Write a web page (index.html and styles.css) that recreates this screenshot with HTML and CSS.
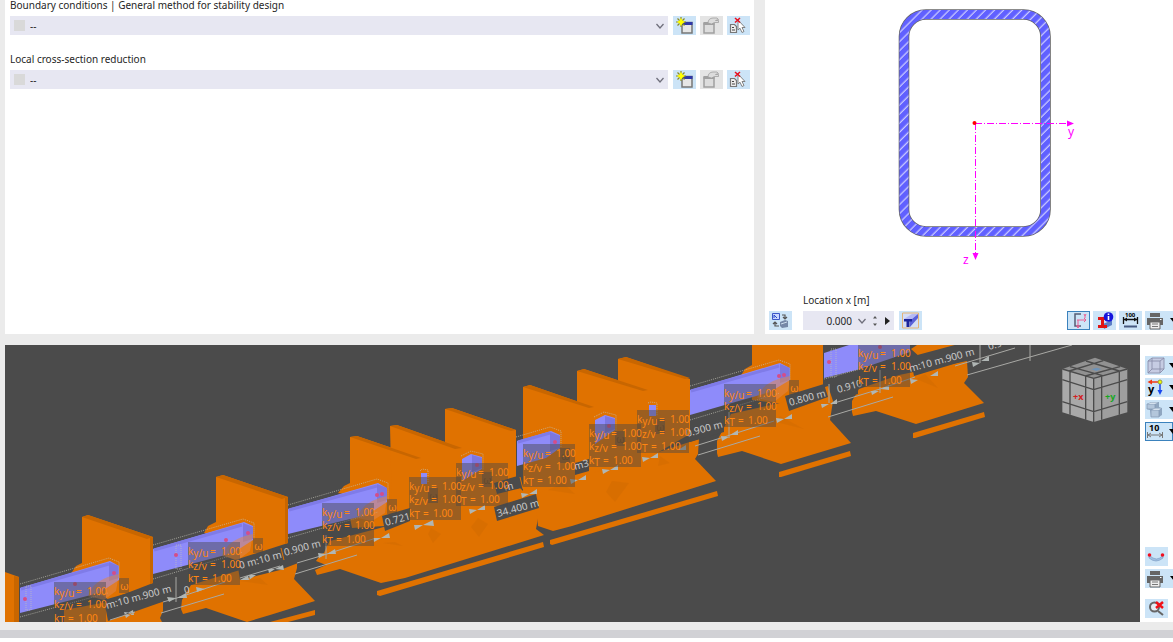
FILE: index.html
```html
<!DOCTYPE html>
<html lang="en">
<head>
<meta charset="utf-8">
<title>Member design</title>
<link rel="stylesheet" href="styles.css">
</head>
<body>
<svg class="defs" width="0" height="0" aria-hidden="true">
  <symbol id="chevron" viewBox="0 0 10 10"><path d="M1.500 3 L5 7 L8.500 3" fill="none" stroke="#70707c" stroke-width="1.300"/></symbol>
  <symbol id="new" viewBox="0 0 23 19">
    <path d="M9 6.500h10v10.500H9z" fill="#e6e6e6" stroke="#777" stroke-width="1.500"/><path d="M8.500 6h11v3h-11z" fill="#2f38a8"/>
    <path d="M8 1v10M3 6h10M4.500 2.500l7 7M11.500 2.500l-7 7" stroke="#8a8b22" stroke-width="1.200"/><path d="M8 2l1.500 2.500 2.500 1.500-2.500 1.500L8 10 6.500 7.500 4 6l2.500-1.500z" fill="#ff0"/>
  </symbol>
  <symbol id="edit" viewBox="0 0 23 19">
    <path d="M4 7.500h10v9.500H4z" fill="#ddd" stroke="#a0a0a0" stroke-width="1.500"/><path d="M3.500 6h11v3h-11z" fill="#a0a0a0"/>
    <path d="M8 7c0-3 2-5 5-5h4l1.500 1.500-3 1h3v2h-4l-3 1.500z" fill="#dcdcdc" stroke="#a0a0a0" stroke-width=".8"/>
  </symbol>
  <symbol id="pick" viewBox="0 0 23 19">
    <path d="M3.500 8.500h4l2 2v6h-6z" fill="#eee" stroke="#777" stroke-width="1.200"/><path d="M5 11.500h2M5 14h3" stroke="#444"/>
    <path d="M11 4v10l2-1.800 2 4.300 2-1-2-4h3z" fill="#fff" stroke="#777" stroke-width=".9"/>
    <path d="M8 2l5 4.500M13 2L8 6.500" stroke="#e81020" stroke-width="1.500"/>
  </symbol>
  <symbol id="printer" viewBox="0 0 18 18">
    <path d="M4 1h10v4H4zM1 6h16v7H1z" fill="#666"/><path d="M4 10h10v7H4z" fill="#eee" stroke="#666"/><path d="M6 12h6M6 14.500h6" stroke="#777"/><path d="M14 7.500h1.500" stroke="#fff"/>
  </symbol>
  <symbol id="caret" viewBox="0 0 8 5"><path d="M0 0h8L4 5z" fill="#000"/></symbol>
</svg>

<main class="app">
  <div class="top">
    <section class="panel form">
      <div class="field">
        <label for="boundary">Boundary conditions | General method for stability design</label>
        <div class="row">
          <div class="combo"><span class="swatch"></span><select id="boundary"><option>--</option></select><svg class="chev"><use href="#chevron"/></svg></div>
          <button class="tool" aria-label="New"><svg><use href="#new"/></svg></button>
          <button class="tool off" aria-label="Edit" disabled><svg><use href="#edit"/></svg></button>
          <button class="tool" aria-label="Pick"><svg><use href="#pick"/></svg></button>
        </div>
      </div>
      <div class="field">
        <label for="reduction">Local cross-section reduction</label>
        <div class="row">
          <div class="combo"><span class="swatch"></span><select id="reduction"><option>--</option></select><svg class="chev"><use href="#chevron"/></svg></div>
          <button class="tool" aria-label="New"><svg><use href="#new"/></svg></button>
          <button class="tool off" aria-label="Edit" disabled><svg><use href="#edit"/></svg></button>
          <button class="tool" aria-label="Pick"><svg><use href="#pick"/></svg></button>
        </div>
      </div>
    </section>

    <section class="panel section">
      <svg class="profile" viewBox="0 0 408 293">
        <defs><pattern id="hatch" width="6.4" height="6.4" patternUnits="userSpaceOnUse" patternTransform="rotate(45)"><path d="M3 0v6.400" stroke="#d0d0ff" stroke-width="1.200"/></pattern></defs>
        <rect x="139" y="14.500" width="141.500" height="217" rx="22" fill="none" stroke="#666" stroke-width="10.600"/>
        <rect x="139" y="14.500" width="141.500" height="217" rx="22" fill="none" stroke="#6060ff" stroke-width="9"/>
        <rect x="139" y="14.500" width="141.500" height="217" rx="22" fill="none" stroke="url(#hatch)" stroke-width="9"/>
        <path d="M210 123.500H302M210.500 123V253" fill="none" stroke="#f0f" stroke-dasharray="7 2 1 2"/>
        <path d="M302 120.500l7 3-7 3zM207.500 253h6l-3 7z" fill="#f0f"/>
        <circle cx="209.500" cy="123" r="2" fill="#f00"/>
        <text x="303" y="136" class="axis">y</text><text x="198" y="264" class="axis">z</text>
      </svg>
      <label class="loc-label" for="loc">Location x [m]</label>
      <div class="bar">
        <button class="tool" aria-label="Swap view"><svg viewBox="0 0 23 19"><path d="M3.500 2.500h7v6h-7z" fill="#c9d7ff" stroke="#3b57c7"/><path d="M5 7V4l3 3" stroke="#2449c8" fill="none"/><path d="M13 4h3v4M14 6l2 2 2-2M10 15H6v-4M4 13l2-2 2 2" stroke="#555" fill="none" stroke-width="1.200"/><path d="M11 11l5-2 3 1v6l-6 1-2-2z" fill="#7588a8"/><path d="M12 13l6-2" stroke="#cde"/></svg></button>
        <div class="spin"><input id="loc" type="text" value="0.000"><svg class="chev"><use href="#chevron"/></svg>
          <button class="updown" aria-label="Step"><svg viewBox="0 0 6 12"><path d="M3 1l2 2.500H1zM3 11l2-2.500H1z" fill="#555"/></svg></button>
          <button class="play" aria-label="Next"><svg viewBox="0 0 5 8"><path d="M0 0l5 4-5 4z" fill="#222"/></svg></button>
        </div>
        <button class="tool" aria-label="Section view"><svg viewBox="0 0 23 19"><path d="M3.500 2h16v15h-16z" fill="#d5def5" stroke="#e3b478"/><path d="M5 8l8-5h6l-6 5z" fill="#b5b9f4"/><path d="M13 8l6-5v4l-8 9V10h2z" fill="#5a61d8"/><path d="M5 8h8v2.500h-2.500V16H7.500v-5.500H5z" fill="#1c259a"/></svg></button>
        <span class="grow"></span>
        <button class="tool active" aria-label="Axes"><svg viewBox="0 0 23 19"><path d="M14 3H8v12h6" fill="none" stroke="#555c75" stroke-width="1.500"/><path d="M10 9h9M11 9v8M17 7l2 2-2 2M9.500 14l1.500 3 1.500-3M17 3l1 2 1-2M18 5v2" fill="none" stroke="#ea5d91"/></svg></button>
        <button class="tool" aria-label="Section info"><svg viewBox="0 0 23 19"><path d="M10 13l9-4v5l-8 4z" fill="#5c7fc6"/><path d="M5 6h9v3h-3v5h3v3H5v-3h3V9H5z" fill="#e01515"/><circle cx="15.500" cy="6" r="4.800" fill="#1515dd"/><path d="M15.500 5v4M15.500 2.500v1.500" stroke="#fff" stroke-width="1.600"/></svg></button>
        <button class="tool" aria-label="Dimensions"><svg viewBox="0 0 23 19"><text x="6" y="6" class="tiny">100</text><path d="M4.500 6v7M18.500 6v7M4 8.500h15" stroke="#111" fill="none" stroke-width="1.300"/><path d="M5 8.500l3-2v4zM18 8.500l-3-2v4z" fill="#111"/><path d="M5 15.500h13" stroke="#455980" stroke-width="2"/></svg></button>
        <button class="tool wide" aria-label="Print"><svg class="pr"><use href="#printer"/></svg><svg class="car"><use href="#caret"/></svg></button>
      </div>
    </section>
  </div>

  <div class="bottom">
    <svg class="scene" viewBox="5 345 1135 277">
      <!-- plates, bases and ground bars -->
      <g class="steel">
        <path d="M5 572l14 5v45H5z"/>
        <path d="M82 517l6-2 65 22v46l-44 17-27-19z"/><path d="M70 575l6-9 6-3v20zM64 610l38-7 54-16 7 11v13l-3 7 2 4H64z"/>
        <path d="M216 477l7-2 65 22v46l-53 17-19-8z"/><path d="M204 533l4-7 8-4v14zM182 600l9-15 49-15 57-14v12l-3 11 21 22-45 14-23 7-41-14-23 6-2-5z"/>
        <path d="M270 622l45-12v5l-27 7z"/>
        <path d="M350 437l7-1 71 24 54 60-130 8-2-10zM338 493l6-7 6-3v12z"/>
        <path d="M390 426l7-1 65 23 10 70-80-7zM445 409l7-1 64 22v80h-71z"/>
        <path d="M523 387l7-2 66 23v90h-73zM577 371l7-2 66 22v90h-73zM618 359l8-2 64 22v55l-52 30-20-13z"/>
        <path d="M316 561l14-20 50-13 140-40 20 20-4 21 8 6-139 43-24 5-41-14-23 6-2-5 11-5z"/>
        <path d="M377 591l166-49 1 5-164 49-3-1zM535 495l20-10 144-46-1 15-3 5 21 22-144 45-19 5-15-5z"/>
        <path d="M550 540l167-49 1 5-166 49-2-1z"/>
        <path d="M752 345h71v42l-40 17-31-4zM740 377l5-8 7-4v14z"/>
        <path d="M717 441l14-27 49-11 48-17 5 15-3 19 21 23-70 21-39-13-24 6-1-4z"/>
        <path d="M779 472l71-21 1 5-70 21h-2z"/>
        <path d="M911 349l6-4h44l-40 13zM852 401l7-12 40-14 68-14 1 16-4 6 20 20-68 21-40-13-23 5-1-4z"/>
        <path d="M913 433l71-21 1 5-70 21h-2z"/>
      </g>
      <g class="edge">
        <path d="M82 517l6-2 65 22-6 2zM216 477l7-2 65 22-6 2zM350 437l7-1 64 22-5 1zM390 426l7-1 65 23-7 1zM445 409l7-1 64 22-5 1zM523 387l7-2 64 22-5 1zM577 371l7-2 64 21-5 1zM618 359l8-2 64 21-5 1z"/>
        <path d="M14 576l5 1v45h-5zM150 538l3-1v46l-3 1zM285 498l3-1v46l-3 1z"/>
        <path d="M260 578l8 7-28-4zM395 542l8 4-20-3zM431 528l10 6-8 9-5-9zM478 518l10 6-9 13-8-10zM563 483l12 11-27-4zM612 481l17 2-14 19-9-10zM660 456l10 7-12 3zM780 416l24 13-28-7zM925 374l13 14-22-9z" opacity=".3"/>
      </g>
      <!-- dark dimension bands -->
      <g class="band">
        <path d="M104 600l65-19 13 14-74 26z"/><path d="M238 567l49-19 42-7-5 12-44 17-40 10z"/>
        <path d="M382 516l28-8v13l-25 10zM494 483l27-8v13l-24 6zM494 507l42-13 3 14-42 13zM575 463l14-4v12l-14 4zM690 430l34-12v14l-34 10z"/>
        <path d="M785 396l39-12 4 13-39 14zM832 386l26-8v16l-22 6zM910 357l67-18v18l-63 19z"/>
      </g>
      <!-- beams -->
      <g class="beam">
        <path d="M20 588l90-27 9 5v14l-20 13-79 20z"/><path d="M153 549l91-27 9 4v14l-20 13-80 21z"/>
        <path d="M288 509l90-26 9 5v14l-20 13-79 19z"/><path d="M421 473h6v11h-6zM462 459l9-5 11 3v12l-20 12z"/>
        <path d="M517 441l34-10 9 4v13l-14 10-29 8zM595 420l10-5 10 3v12l-20 14zM649 405h7v11h-7z"/>
        <path d="M690 390l90-27 10 5v12l-20 12-80 23zM824 353l25-8h61v7l-50 17-36 9z"/>
      </g>
      <g class="beam-hi">
        <path d="M21 589l88-25M154 550l88-25M289 510l88-24M691 391l88-25M518 442l32-9"/>
      </g>
      <g class="beam-end">
        <path d="M109 562l10 4v12l-10 3zM243 523l10 4v12l-10 3zM377 484l10 4v12l-10 3zM472 455l10 3v10l-10 4zM550 432l10 4v12l-10 3zM605 416l10 3v10l-10 4zM780 364l10 4v12l-10 3z"/>
      </g>
      <g class="ghost">
        <path d="M20 584l89-26 10 4v17M20 617l88-24M153 545l90-26 11 4v16M153 579l90-27M288 505l89-26 11 4v17M288 538l90-26M516 437l34-10 11 4v16M690 386l89-26 11 4v16M690 420l90-27M824 379l40-11"/>
        <path d="M420 471l2-2 6 1v13M461 456l10-5 12 3v16M594 417l10-5 12 3v16M648 403l3-1 6 1v13M26 610v-24h5v24zM176 569v-24h5v24zM831 377v-28h5v28z"/>
      </g>
      <g class="node"><circle cx="25" cy="599" r="2"/><circle cx="75" cy="584" r="2"/><circle cx="114" cy="573" r="2"/><circle cx="176" cy="555" r="2"/><circle cx="226" cy="540" r="2"/><circle cx="248" cy="533" r="2"/><circle cx="377" cy="495" r="2"/><circle cx="382" cy="494" r="2"/><circle cx="477" cy="465" r="2"/><circle cx="555" cy="442" r="2"/><circle cx="609" cy="426" r="2"/><circle cx="779" cy="376" r="2"/><circle cx="784" cy="375" r="2"/><circle cx="829" cy="362" r="2"/><circle cx="880" cy="347" r="2"/></g>
      <!-- gusset discs in front of the beams -->
      <g class="disc"><path d="M88 596q5-17 31-22l-3 17-12 9zM222 556q5-17 31-22l-3 17-12 9zM357 518q5-17 30-22l-2 17-13 8zM757 398q5-17 33-22l-2 15-14 11z"/></g>

      <!-- dimension lines -->
      <g class="dim">
        <path d="M163 602l14-4 48-16M176 577v25M161 613l63-19M297 563l27-8 49-16M326 535v24M295 574l62-19M695 446l29-9 50-16M729 412v26M698 455l62-19M829 384v19M831 404l49-15 35-12M880 370v23M828 417l65-20M955 366l60-18M980 345v18M967 375l105-30M1030 345v16M110 620l25-8M240 578l40-12"/>
      </g>
      <g class="arrow">
        <path d="M176 598l-9-1 2 5zM177 598l9-5 1 5zM133 613l-9-1 2 6zM124 615l9-5 1 5zM197 592l-1-5 9 2zM240 580l9-5 1 5zM256 575l-8 0 1 5zM275 569l8-4 1 5zM275 569l-7 0 1 4zM326 554l-8-1 1 5zM327 554l8-5 1 5zM381 538l8-5 1 5zM381 538l-8 0 1 4zM423 525l10-5 1 6zM423 525l-9 0 1 5zM477 510l8-5v5zM477 510l-8-1 1 5zM529 494l8-5v5zM529 494l-8-1 1 5zM578 480l8-5v5zM578 480l-8-1 1 5zM610 470l8-5v5zM610 470l-8-1 1 5zM650 458l8-5v5zM650 458l-8-1 1 5zM678 450l8-5v5zM729 437l-8-1 1 5zM730 435l8-5v5zM784 419l8-5v5zM784 419l-8-1 1 5zM829 404l-8 0 1 4zM830 404l7-5v5zM879 391l-8 0 1 4zM881 389l8-4v5zM930 376l8-5v5zM918 380l-8-1 1 5zM980 363l-8-1 1 5zM981 361l8-5v5z"/>
      </g>
      <g class="dimtext">
        <text transform="translate(107 609) rotate(-15)">m:10 m.900 m</text>
        <text transform="translate(185 594) rotate(-15)">0</text>
        <text transform="translate(240 569) rotate(-15)">0 m:10 m</text>
        <text transform="translate(285 556) rotate(-15)">0.900 m</text>
        <text transform="translate(386 526) rotate(-15)">0.721</text>
        <text transform="translate(505 491) rotate(-15)"> m</text>
        <text transform="translate(498 517) rotate(-15)">34.400 m</text>
        <text transform="translate(575 470) rotate(-15)">m3</text>
        <text transform="translate(687 437) rotate(-15)">0.900 m</text>
        <text transform="translate(790 406) rotate(-15)">0.800 m</text>
        <text transform="translate(838 393) rotate(-15)">0.910</text>
        <text transform="translate(910 372) rotate(-15)">m:10 m.900 m</text>
        <text transform="translate(989 350) rotate(-15)">0.9</text>
      </g>
      <path d="M281 548l3 12M520 477l3 12" stroke="#e07200"/>

      <g class="omega">
        <rect x="119" y="578" width="10" height="15"/><text x="120" y="590">ω</text>
        <rect x="253" y="538" width="10" height="15"/><text x="254" y="550">ω</text>
        <rect x="387" y="499" width="10" height="15"/><text x="388" y="511">ω</text>
        <rect x="789" y="380" width="10" height="15"/><text x="790" y="392">ω</text>
        <g class="behind">
        <rect x="428" y="488" width="10" height="15"/><text x="429" y="500">ω</text>
        <rect x="482" y="472" width="10" height="15"/><text x="483" y="484">ω</text>
        <rect x="560" y="448" width="10" height="15"/><text x="561" y="460">ω</text>
        <rect x="615" y="431" width="10" height="15"/><text x="616" y="443">ω</text>
        <rect x="655" y="419" width="10" height="15"/><text x="656" y="431">ω</text>
        </g>
      </g>

      <!-- effective length tags -->
      <g class="tag">
        <g transform="translate(54 582)"><rect width="52" height="43"/><text y="13">k<tspan class="sub" dy="2">y/u</tspan><tspan x="22" dy="-2">= </tspan><tspan x="33">1.00</tspan></text><text y="26">k<tspan class="sub" dy="2">z/v</tspan><tspan x="22" dy="-2">= </tspan><tspan x="33">1.00</tspan></text><text y="40">k<tspan class="sub" dy="2">T</tspan><tspan x="14" dy="-2">= </tspan><tspan x="24">1.00</tspan></text></g>
        <g transform="translate(188 542)"><rect width="52" height="43"/><text y="13">k<tspan class="sub" dy="2">y/u</tspan><tspan x="22" dy="-2">= </tspan><tspan x="33">1.00</tspan></text><text y="26">k<tspan class="sub" dy="2">z/v</tspan><tspan x="22" dy="-2">= </tspan><tspan x="33">1.00</tspan></text><text y="40">k<tspan class="sub" dy="2">T</tspan><tspan x="14" dy="-2">= </tspan><tspan x="24">1.00</tspan></text></g>
        <g transform="translate(322 503)"><rect width="52" height="43"/><text y="13">k<tspan class="sub" dy="2">y/u</tspan><tspan x="22" dy="-2">= </tspan><tspan x="33">1.00</tspan></text><text y="26">k<tspan class="sub" dy="2">z/v</tspan><tspan x="22" dy="-2">= </tspan><tspan x="33">1.00</tspan></text><text y="40">k<tspan class="sub" dy="2">T</tspan><tspan x="14" dy="-2">= </tspan><tspan x="24">1.00</tspan></text></g>
        <g transform="translate(456 463)"><rect width="52" height="43"/><text y="13">k<tspan class="sub" dy="2">y/u</tspan><tspan x="22" dy="-2">= </tspan><tspan x="33">1.00</tspan></text><text y="26"><tspan class="sub" x="5" dy="2">z/v</tspan><tspan x="22" dy="-2">= </tspan><tspan x="33">1.00</tspan></text><text y="40"><tspan class="sub" x="5" dy="2">T</tspan><tspan x="14" dy="-2">= </tspan><tspan x="24">1.00</tspan></text></g>
        <g transform="translate(409 477)"><rect width="52" height="43"/><text y="13">k<tspan class="sub" dy="2">y/u</tspan><tspan x="22" dy="-2">= </tspan><tspan x="33">1.00</tspan></text><text y="26">k<tspan class="sub" dy="2">z/v</tspan><tspan x="22" dy="-2">= </tspan><tspan x="33">1.00</tspan></text><text y="40">k<tspan class="sub" dy="2">T</tspan><tspan x="14" dy="-2">= </tspan><tspan x="24">1.00</tspan></text></g>
        <g transform="translate(523 444)"><rect width="52" height="43"/><text y="13">k<tspan class="sub" dy="2">y/u</tspan><tspan x="22" dy="-2">= </tspan><tspan x="33">1.00</tspan></text><text y="26">k<tspan class="sub" dy="2">z/v</tspan><tspan x="22" dy="-2">= </tspan><tspan x="33">1.00</tspan></text><text y="40">k<tspan class="sub" dy="2">T</tspan><tspan x="14" dy="-2">= </tspan><tspan x="24">1.00</tspan></text></g>
        <g transform="translate(637 410)"><rect width="52" height="43"/><text y="13">k<tspan class="sub" dy="2">y/u</tspan><tspan x="22" dy="-2">= </tspan><tspan x="33">1.00</tspan></text><text y="26"><tspan class="sub" x="5" dy="2">z/v</tspan><tspan x="22" dy="-2">= </tspan><tspan x="33">1.00</tspan></text><text y="40"><tspan class="sub" x="5" dy="2">T</tspan><tspan x="14" dy="-2">= </tspan><tspan x="24">1.00</tspan></text></g>
        <g transform="translate(589 424)"><rect width="52" height="43"/><text y="13">k<tspan class="sub" dy="2">y/u</tspan><tspan x="22" dy="-2">= </tspan><tspan x="33">1.00</tspan></text><text y="26">k<tspan class="sub" dy="2">z/v</tspan><tspan x="22" dy="-2">= </tspan><tspan x="33">1.00</tspan></text><text y="40">k<tspan class="sub" dy="2">T</tspan><tspan x="14" dy="-2">= </tspan><tspan x="24">1.00</tspan></text></g>
        <g transform="translate(724 384)"><rect width="52" height="43"/><text y="13">k<tspan class="sub" dy="2">y/u</tspan><tspan x="22" dy="-2">= </tspan><tspan x="33">1.00</tspan></text><text y="26">k<tspan class="sub" dy="2">z/v</tspan><tspan x="22" dy="-2">= </tspan><tspan x="33">1.00</tspan></text><text y="40">k<tspan class="sub" dy="2">T</tspan><tspan x="14" dy="-2">= </tspan><tspan x="24">1.00</tspan></text></g>
        <g transform="translate(858 344)"><rect width="52" height="43"/><text y="13">k<tspan class="sub" dy="2">y/u</tspan><tspan x="22" dy="-2">= </tspan><tspan x="33">1.00</tspan></text><text y="26">k<tspan class="sub" dy="2">z/v</tspan><tspan x="22" dy="-2">= </tspan><tspan x="33">1.00</tspan></text><text y="40">k<tspan class="sub" dy="2">T</tspan><tspan x="14" dy="-2">= </tspan><tspan x="24">1.00</tspan></text></g>
      </g>

      <!-- navigation cube -->
      <g transform="translate(1050 285) scale(.3333)">
        <path d="M135 218L232 252 131 280 37 252z" fill="#919191"/><path d="M37 252l94 28v131l-94-29z" fill="#a9a9a9"/><path d="M232 252l-101 28v131l101-29z" fill="#9e9e9e"/>
        <path d="M37 252l94 28 101-28M131 280v131M60 259v130M107 273v131M155 273v131M208 259v130M37 284l94 30 101-30M37 350l94 30 101-30M60 245l98 27M108 228l100 30M160 227L58 258M210 245l-104 28" fill="none" stroke="#4b4b4b" stroke-width="4"/>
        <path d="M124 253l16-5 14 4-15 6z" fill="#6e93b8"/>
      </g>
      <text class="face" x="1073" y="400" fill="#d42020">+x</text><text class="face" x="1105" y="400" fill="#16a81e">+y</text>
    </svg>

    <aside class="side">
      <button class="tool wide" aria-label="View cube"><svg viewBox="0 0 23 19"><path d="M3 5l4-3h12v11l-4 4H3z" fill="#c6cce3"/><path d="M3 5h12v12H3zM3 5l4-3h12v11l-4 4M15 5l4-3M7 2v11h12M3 17l4-4" fill="none" stroke="#8b8faa" stroke-width=".9"/></svg><svg class="car"><use href="#caret"/></svg></button>
      <button class="tool wide" aria-label="View direction"><svg viewBox="0 0 23 19"><path d="M4 4h10" stroke="#f23a13" stroke-width="1.500"/><path d="M7 1.500L2.500 4 7 6.500z" fill="#f23a13"/><path d="M15 5v8" stroke="#1847ef" stroke-width="1.500"/><path d="M12.500 12h5L15 17z" fill="#1847ef"/><circle cx="15" cy="4" r="2" fill="#ef0" stroke="#994"/><text x="3" y="15" class="yv">y</text></svg><svg class="car"><use href="#caret"/></svg></button>
      <button class="tool wide" aria-label="Display style"><svg viewBox="0 0 23 19"><path d="M2 4l4-2h8v5l3 1v7l-3 2H6l-1-7-3-1z" fill="#8fa6c0"/><path d="M2 4h8v5H2zM6 10h8v7H6z" fill="#b3c6db" stroke="#8197b2" stroke-width=".7"/><path d="M3 4l3-1.500h7L10 4zM7 10l3-1.500h6L14 10z" fill="#d5e1ee"/></svg><svg class="car"><use href="#caret"/></svg></button>
      <button class="tool wide active" aria-label="Dimension values"><svg viewBox="0 0 23 19"><text x="4" y="9" class="ten">10</text><path d="M2.500 10v6M17.500 10v6M3 13h14M6 11l-3 2 3 2M14 11l3 2-3 2" stroke="#777" fill="none"/></svg><svg class="car"><use href="#caret"/></svg></button>
      <span class="grow"></span>
      <button class="tool" aria-label="Deformation"><svg viewBox="0 0 23 19"><path d="M4 8q8 8 14 0v3q-7 6-14 0z" fill="#9fbfe2" stroke="#7394bd" stroke-width=".6"/><circle cx="4.500" cy="8" r="1.800" fill="#f01020"/><circle cx="17.500" cy="8" r="1.800" fill="#f01020"/></svg></button>
      <button class="tool wide" aria-label="Print"><svg class="pr"><use href="#printer"/></svg><svg class="car"><use href="#caret"/></svg></button>
      <button class="tool last" aria-label="Reset zoom"><svg viewBox="0 0 23 19"><circle cx="9.500" cy="8" r="4.500" fill="#e5edf5" stroke="#666" stroke-width="2"/><path d="M13 12l5 4" stroke="#666" stroke-width="2"/><path d="M11 3l7 6M18 3l-7 6" stroke="#f01018" stroke-width="2.500"/></svg></button>
    </aside>
  </div>
  <div class="strip"></div>
</main>
</body>
</html>
```
FILE: styles.css
```css
* { box-sizing: border-box; }
body { margin: 0; background: #fff; color: #262626; font: 10px/14px "Noto Sans", "Open Sans", sans-serif; }
.defs { position: absolute; }
.app { background: #ebebeb; overflow: hidden; }
button { padding: 0; border: 0; background: none; font: inherit; }
svg { display: block; }
.top { display: grid; grid-template-columns: 749fr 408fr; gap: 11px; padding-left: 5px; }
.panel { background: #fff; min-width: 0; }
.form { padding: 0 5px; display: flex; flex-direction: column; gap: 18px; }
.field label { display: block; height: 16px; line-height: 10px; }
.field + .field label { line-height: 12px; height: 17px; }
.row { display: flex; gap: 3px; }
.combo { flex: 1; height: 19px; display: flex; align-items: center; background: #e7e7f2; padding: 0 3px 0 4px; margin-right: 2px; }
.swatch { width: 11px; height: 11px; background: #d9d9d9; }
.combo select { flex: 1; height: 19px; border: 0; background: transparent; appearance: none; font: inherit; color: inherit; padding: 0 5px; }
.chev { width: 10px; height: 10px; flex: none; }
.tool { width: 23px; height: 19px; flex: none; background: #cce4f7; display: flex; align-items: center; overflow: hidden; }
.row .tool + .tool { margin-left: 1px; }
.row .tool:last-child { margin-right: -1px; }
.tool > svg { width: 23px; height: 19px; flex: none; }
.tool.off { background: #e4e4e4; }
.tool.active { box-shadow: inset 0 0 0 1px #3b82bd; }
.tool.wide { width: 28px; }
.tool > .pr { width: 18px; height: 18px; margin: 0 5px 0 1px; }
.tool > .car { width: 8px; height: 5px; margin-left: 1px; }
.section { display: flex; flex-direction: column; padding-bottom: 4px; }
.profile { width: 100%; height: 293px; }
.axis { font-size: 12px; fill: #f0f; }
.loc-label { padding-left: 38px; height: 18px; line-height: 14px; }
.bar { display: flex; padding-left: 4px; gap: 3px; }
.spin { display: flex; align-items: center; width: 91px; height: 19px; background: #e7e7f2; margin: 0 2px 0 8px; }
.spin input { width: 49px; border: 0; padding: 0; background: transparent; text-align: right; font: inherit; color: inherit; }
.spin .chev { margin: 0 5px; }
.updown svg { width: 6px; height: 12px; }
.play svg { width: 5px; height: 8px; margin-left: 7px; }
.grow { flex: 1; }
.tiny { font: bold 6px "Open Sans", sans-serif; }
.yv { font: bold 11px "Open Sans", sans-serif; }
.ten { font: bold 9px "Open Sans", sans-serif; }

.bottom { display: flex; padding: 11px 0 8px 5px; }
.scene { flex: 1; min-width: 0; background: #4b4b4b; }
.side { width: 33px; background: #fff; display: flex; flex-direction: column; gap: 3px; padding: 11px 0 4px 5px; }
.side .last { margin-top: 8px; }
.strip { height: 8px; background: #d1d1d5; }

.steel { fill: #e07200; }
.edge { fill: #c86600; }
.band { fill: #4b4b4b; }
.beam { fill: #8e8bfa; }
.beam-hi { fill: none; stroke: #7f7be8; stroke-width: 3; }
.beam-end { fill: #706bcf; opacity: .6; }
.ghost { fill: none; stroke: #c3c3b8; stroke-dasharray: 1 1; opacity: .7; }
.node { fill: #d44d88; }
.disc { fill: #df864c; opacity: .55; }
.dim { fill: none; stroke: #a9a9a5; }
.arrow { fill: #b0b6b4; }
.dimtext { fill: #c9c9c9; font-size: 10px; }
.omega rect, .tag rect { fill: #474747; opacity: .45; }
.omega text, .tag text { fill: #ff8612; font-size: 10px; }
.omega text { font-size: 11px; }
.omega .behind text { fill: #7a4a1c; }
.tag .sub { font-size: 10px; }
.face { font: bold 9px "Open Sans", sans-serif; }
```
